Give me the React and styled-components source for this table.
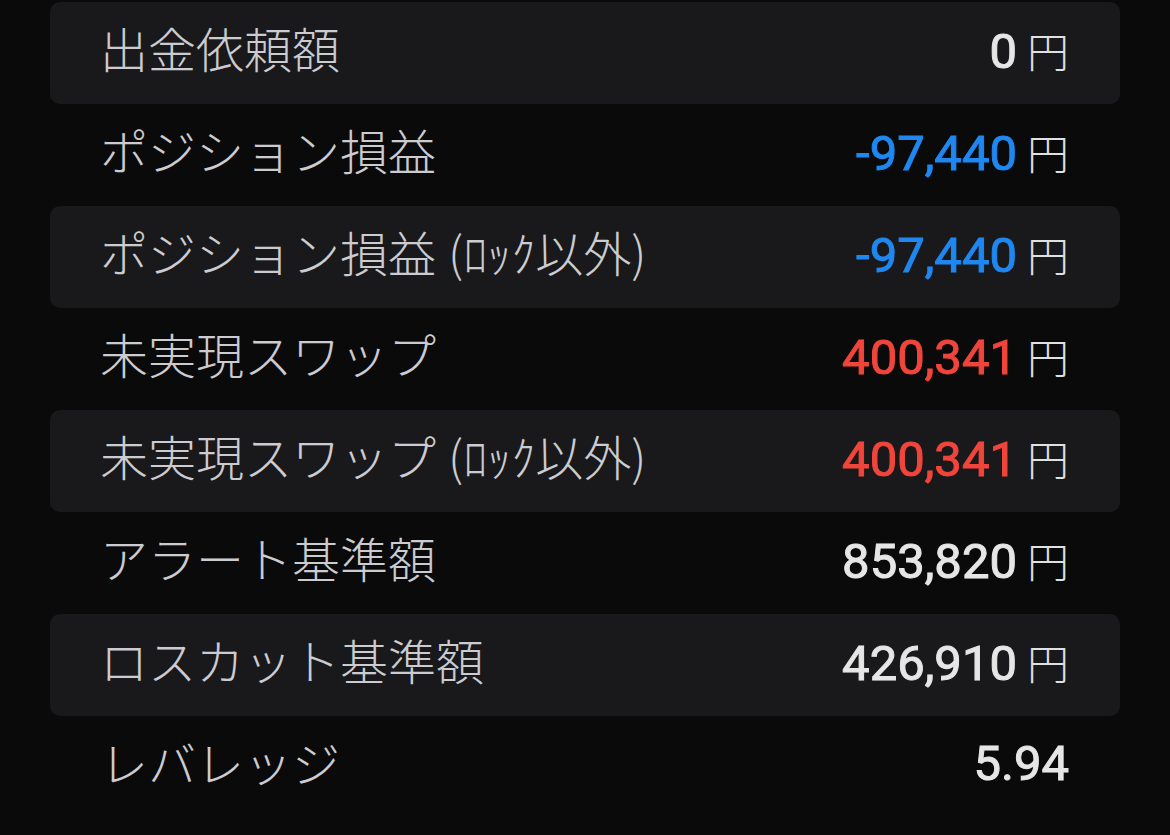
import React from "react";
import styled, { createGlobalStyle } from "styled-components";

const GlobalStyle = createGlobalStyle`
  html, body {
    margin: 0;
    padding: 0;
    background: #0a0a0a;
  }
`;

const Page = styled.div`
  width: 1170px;
  height: 835px;
  overflow: hidden;
  background: #0a0a0a;
  padding: 2px 50px 0;
  box-sizing: border-box;
`;

const List = styled.div`
  display: flex;
  flex-direction: column;
`;

const Row = styled.div`
  height: 102px;
  display: flex;
  align-items: center;
  justify-content: space-between;
  padding: 0 51px 8px 50px;
  box-sizing: border-box;
  border-radius: 10px;
  background: ${(p) => (p.$striped ? "#19191b" : "transparent")};
`;

const Label = styled.div`
  font-family: "Noto Sans CJK JP", "Noto Sans", sans-serif;
  font-size: 48px;
  font-weight: 300;
  color: #cbcbd0;
  white-space: nowrap;
  margin-top: -4px;
`;

const Note = styled.span`
  margin-left: 12px;
`;

const Value = styled.div`
  display: flex;
  align-items: baseline;
  gap: 10px;
`;

const Amount = styled.span`
  font-family: Roboto, "Liberation Sans", sans-serif;
  font-size: 49px;
  font-weight: 400;
  -webkit-text-stroke: 1px currentColor;
  color: ${(p) => p.$color || "#e6e6e6"};
`;

const Unit = styled.span`
  font-family: "Noto Sans CJK JP", "Noto Sans", sans-serif;
  font-size: 42px;
  font-weight: 300;
  color: #e0e0e0;
`;

const rows = [
  { label: "出金依頼額", value: "0", unit: true },
  { label: "ポジション損益", value: "-97,440", unit: true, color: "#1f87f0" },
  { label: "ポジション損益", note: "(ﾛｯｸ以外)", value: "-97,440", unit: true, color: "#1f87f0" },
  { label: "未実現スワップ", value: "400,341", unit: true, color: "#f0453b" },
  { label: "未実現スワップ", note: "(ﾛｯｸ以外)", value: "400,341", unit: true, color: "#f0453b" },
  { label: "アラート基準額", value: "853,820", unit: true },
  { label: "ロスカット基準額", value: "426,910", unit: true },
  { label: "レバレッジ", value: "5.94", unit: false },
];

const App = () => {
  return (
    <>
      <GlobalStyle />
      <Page>
        <List>
          {rows.map((r, i) => (
            <Row key={i} $striped={i % 2 === 0}>
              <Label>
                {r.label}
                {r.note && <Note>{r.note}</Note>}
              </Label>
              <Value>
                <Amount $color={r.color}>{r.value}</Amount>
                {r.unit && <Unit>円</Unit>}
              </Value>
            </Row>
          ))}
        </List>
      </Page>
    </>
  );
};

export default App;
